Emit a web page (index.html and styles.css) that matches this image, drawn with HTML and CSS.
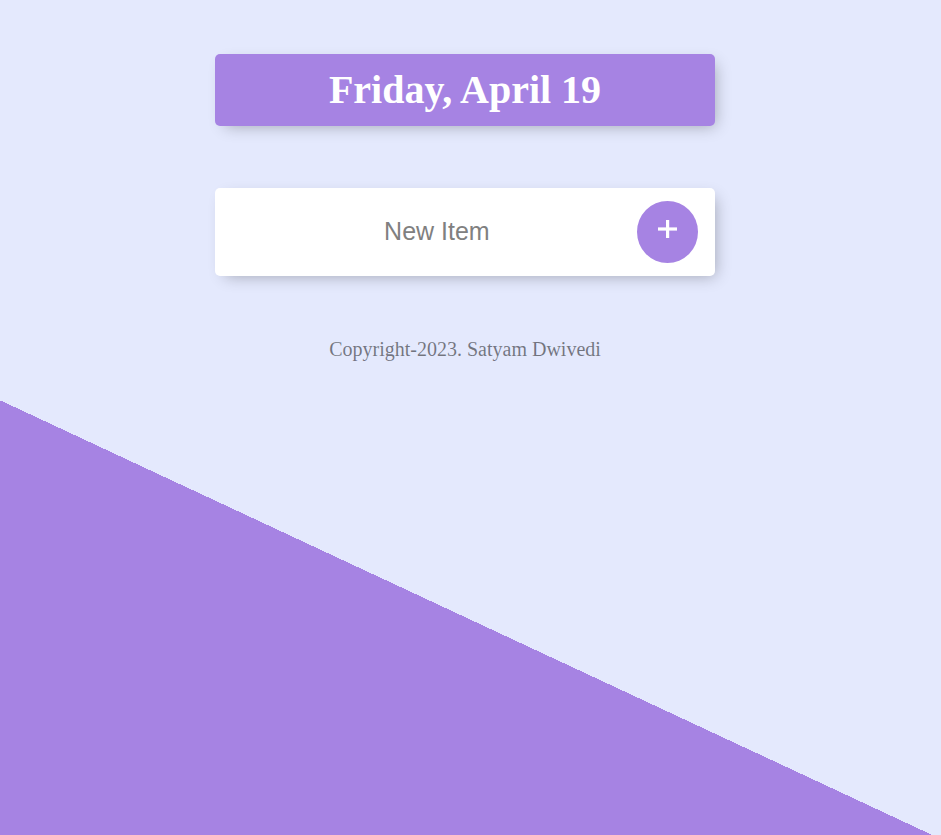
FILE: index.html
```html
<!DOCTYPE html>
<html lang="en">
<head>
<meta charset="utf-8">
<title>To-Do List</title>
<link rel="stylesheet" href="styles.css">
</head>
<body>
<main class="page">
  <div class="box heading">
    <h1 class="title">Friday, April 19</h1>
  </div>
  <div class="box">
    <form class="item" onsubmit="return false">
      <input class="new-item" type="text" name="newItem" placeholder="New Item" autocomplete="off">
      <button class="add-btn" type="submit" name="list" aria-label="Add">
        <svg class="plus" width="19" height="18" viewBox="0 0 19 18" aria-hidden="true">
          <rect x="8" y="0" width="3.2" height="18" fill="#fff"/>
          <rect x="0" y="7.4" width="19" height="3.2" fill="#fff"/>
        </svg>
      </button>
    </form>
  </div>
  <footer class="footer">Copyright-2023. Satyam Dwivedi</footer>
</main>
</body>
</html>
```
FILE: styles.css
```css
html {
  min-height: 100vh;
  background-color: #E4E9FD;
  background-image: linear-gradient(25deg, #A683E3 394px, #E4E9FD 394px);
}

body {
  margin: 0;
  font-family: "Liberation Serif", "Times New Roman", serif;
}

.page {
  width: 930px;
  padding-top: 54px;
  display: flex;
  flex-direction: column;
}

.box {
  width: 500px;
  margin: 0 auto;
  background: #fff;
  border-radius: 5px;
  box-shadow: 5px 5px 15px -5px rgba(0, 0, 0, 0.3);
}

.heading {
  height: 72px;
  margin-bottom: 62px;
  background-color: #A683E3;
  display: flex;
  align-items: center;
  justify-content: center;
}

.title {
  margin: 0;
  font-size: 40px;
  line-height: 1;
  font-weight: bold;
  color: #fff;
}

.item {
  height: 88px;
  display: flex;
  align-items: center;
}

.new-item {
  margin-left: 22px;
  width: 405px;
  height: 60px;
  padding: 0 0 2px;
  border: none;
  background: transparent;
  text-align: center;
  font-family: "Liberation Sans", Arial, sans-serif;
  font-size: 25px;
  color: #333;
}

.new-item::placeholder {
  color: grey;
  opacity: 1;
}

.new-item:focus {
  outline: none;
}

.add-btn {
  margin-left: auto;
  margin-right: 17px;
  width: 62px;
  height: 62px;
  padding: 0 0 6px;
  border: 0;
  border-radius: 50%;
  background-color: #A683E3;
  display: flex;
  align-items: center;
  justify-content: center;
  cursor: pointer;
}

.plus {
  display: block;
}

.footer {
  margin-top: 62px;
  text-align: center;
  font-size: 20px;
  color: rgba(0, 0, 0, 0.5);
}
```
